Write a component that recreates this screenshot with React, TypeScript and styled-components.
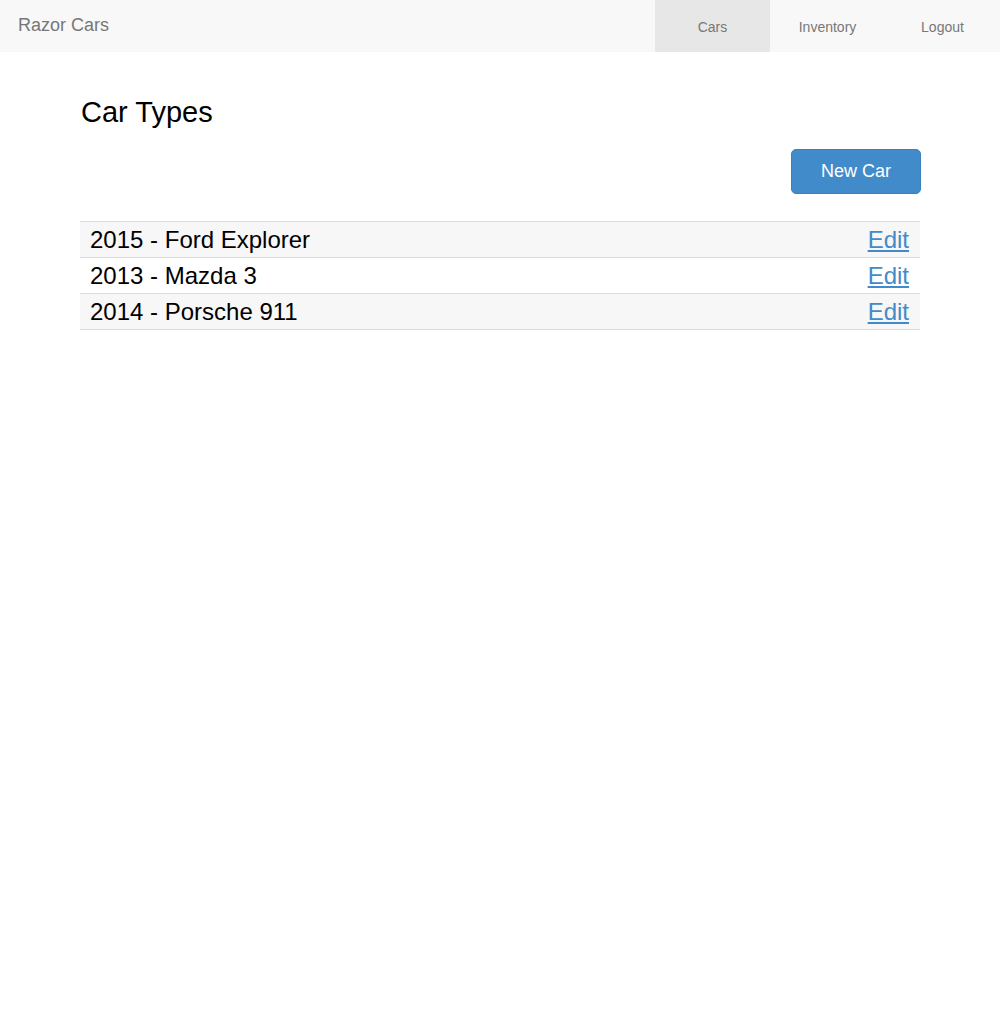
import React from 'react'
import styled, { createGlobalStyle } from 'styled-components'

const GlobalStyle = createGlobalStyle`
  body {
    margin: 0;
    font-family: 'Liberation Sans', Arial, sans-serif;
    color: #000;
    background: #fff;
  }
`

const Navbar = styled.nav`
  display: flex;
  justify-content: space-between;
  align-items: stretch;
  height: 52px;
  background: #f8f8f8;
`

const Brand = styled.a`
  display: flex;
  align-items: center;
  padding: 0 18px 1px;
  font-size: 18px;
  color: #777;
  text-decoration: none;
`

const NavList = styled.ul`
  display: flex;
  margin: 0;
  padding: 0;
  list-style: none;
`

const NavItem = styled.li<{ $active?: boolean }>`
  display: flex;
  align-items: center;
  justify-content: center;
  width: 115px;
  padding-top: 1px;
  font-size: 14px;
  color: #777;
  background: ${(p) => (p.$active ? '#e7e7e7' : 'transparent')};
`

const Container = styled.main`
  width: 840px;
  margin: 0 auto;
  padding-top: 44px;
`

const Title = styled.h2`
  margin: 0 0 21px 1px;
  font-size: 29px;
  font-weight: normal;
  line-height: 32px;
`

const Actions = styled.div`
  display: flex;
  justify-content: flex-end;
  margin-bottom: 27px;
`

const Button = styled.button`
  width: 130px;
  height: 45px;
  margin-right: -1px;
  border: 1px solid #3a80bf;
  border-radius: 5px;
  background: #428bca;
  color: #fff;
  font-family: inherit;
  font-size: 18px;
  padding-bottom: 2px;
`

const Table = styled.div`
  border-bottom: 1px solid #ddd;
`

const Row = styled.div<{ $striped?: boolean }>`
  display: flex;
  justify-content: space-between;
  align-items: center;
  height: 35px;
  padding: 0 11px 0 10px;
  border-top: 1px solid #ddd;
  background: ${(p) => (p.$striped ? '#f7f7f7' : '#fff')};
  font-size: 24px;
`

const EditLink = styled.a`
  color: #428bca;
  text-decoration: underline;
  cursor: pointer;
`

const cars = [
  { id: 1, year: 2015, name: 'Ford Explorer' },
  { id: 2, year: 2013, name: 'Mazda 3' },
  { id: 3, year: 2014, name: 'Porsche 911' },
]

const App = () => {
  return (
    <>
      <GlobalStyle />
      <Navbar>
        <Brand>Razor Cars</Brand>
        <NavList>
          <NavItem $active>Cars</NavItem>
          <NavItem>Inventory</NavItem>
          <NavItem>Logout</NavItem>
        </NavList>
      </Navbar>
      <Container>
        <Title>Car Types</Title>
        <Actions>
          <Button>New Car</Button>
        </Actions>
        <Table>
          {cars.map((car, i) => (
            <Row key={'car-' + car.id} $striped={i % 2 === 0}>
              <span>
                {car.year} - {car.name}
              </span>
              <EditLink>Edit</EditLink>
            </Row>
          ))}
        </Table>
      </Container>
    </>
  )
}

export default App
